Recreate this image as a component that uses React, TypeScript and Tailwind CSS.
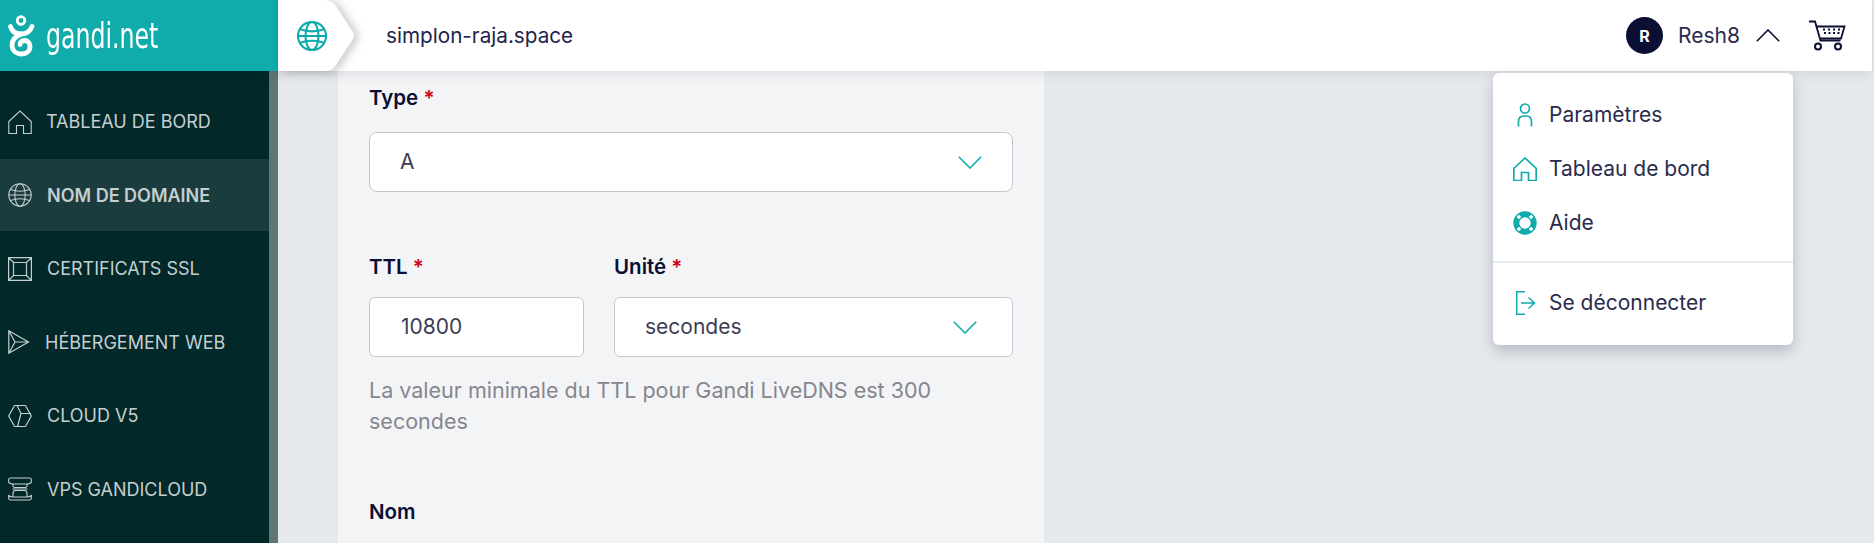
import type { ReactNode } from 'react';

function HomeIcon({ className, width = 1.1 }: { className: string; width?: number }) {
  return (
    <svg className={className} viewBox="0 0 24 24" fill="none" stroke="currentColor" strokeWidth={width}>
      <path d="M.8 11.5 12 1l11.200 10.500v12H15.500v-8h-7v8H.8z" />
    </svg>
  );
}

function GlobeIcon({ className, width = 1.1 }: { className: string; width?: number }) {
  return (
    <svg className={className} viewBox="0 0 24 24" fill="none" stroke="currentColor" strokeWidth={width}>
      <circle cx="12" cy="12" r="11.200" />
      <ellipse cx="12" cy="12" rx="5.200" ry="11.200" />
      <path d="M2.600 6.600c5.400 2.200 13.400 2.200 18.800 0M2.600 17.400c5.400-2.200 13.400-2.200 18.800 0M.8 12h22.400" />
    </svg>
  );
}

function FrameIcon() {
  return (
    <svg className="h-6 w-6" viewBox="0 0 24 24" fill="none" stroke="currentColor" strokeWidth="1.200">
      <path d="M.6.6h22.800v22.800H.6zM5.500 5.500h13v13h-13zM.6.6l4.900 4.900M23.400.6l-4.900 4.900M.6 23.400l4.900-4.900M23.400 23.400l-4.900-4.900" />
    </svg>
  );
}

function SendIcon() {
  return (
    <svg className="h-6 w-6" viewBox="0 0 24 24" fill="none" stroke="currentColor" strokeWidth="1.200">
      <path d="M.8.8 20.500 12 .8 23.200zM.8.8 7 12 .8 23.200M7 12h13.500" />
    </svg>
  );
}

function CubeIcon() {
  return (
    <svg className="h-6 w-6" viewBox="0 0 24 24" fill="none" stroke="currentColor" strokeWidth="1.200">
      <path d="M6.500 1.500h11L23.300 12l-5.800 10.500h-11L.7 12zM9 1.500 13 9.500h10M13 9.500 9.500 22.500" />
    </svg>
  );
}

function ServerIcon() {
  return (
    <svg className="h-6 w-6" viewBox="0 0 24 24" fill="none" stroke="currentColor" strokeWidth="1.100">
      <path d="M.7 5.500V2.500Q.7 1 2.500 1h19q1.800 0 1.800 1.500v3q-2 1.500-4 1.500H4.700Q2.700 7 .7 5.500z" />
      <path d="M.7 18.500v3Q.7 23 2.500 23h19q1.800 0 1.800-1.500v-3q-2 1.500-4 1.500H4.700q-2 0-4-1.500z" />
      <path d="M5 7v2q0 1.500 2 1.500h10q2 0 2-1.500V7M5 20v-3q0-3.500 2-3.500h10q2 0 2 3.500v3M4.500 12h15" />
    </svg>
  );
}

function Chevron({ className }: { className: string }) {
  return (
    <svg className={className} viewBox="0 0 24 13" fill="none" stroke="currentColor" strokeWidth="1.600">
      <path d="M.8.8 12 12 23.200.8" />
    </svg>
  );
}

function LogoMark() {
  return (
    <svg className="h-[42px] w-[27px]" viewBox="0 0 27 42" fill="none" stroke="white">
      <circle cx="13" cy="5.500" r="3.800" strokeWidth="2.800" />
      <path d="M2.500 11.500c1.500 5.500 5.500 7.500 10.500 7.500s9-2 11-7.500" strokeWidth="4.800" strokeLinecap="round" />
      <path d="M13 19c-5 2-9 5.500-9 11 0 5.500 4 9 9.500 9 5 0 8.500-3 8.500-7.500 0-3.500-2.500-6-5.500-6-2.500 0-4.500 1.500-4.500 4" strokeWidth="4.800" strokeLinecap="round" />
    </svg>
  );
}

function Cart() {
  return (
    <svg className="h-[31px] w-[37px] text-[#0a0f33]" viewBox="0 0 37 31" fill="none" stroke="currentColor">
      <path d="M0 1.500h6l5.500 19h20" strokeWidth="1.800" />
      <path d="M8 6.500h27.500l-3.500 12H11.500" strokeWidth="1.800" />
      <circle cx="9" cy="26.500" r="3" strokeWidth="2" />
      <circle cx="29" cy="26.500" r="3" strokeWidth="2" />
      <path d="M14 9.500h2M19 9.500h2M24 9.500h2M29 9.500h2M15 13h2M19.500 13h2M24 13h2M28.500 13h2" strokeWidth="1.800" />
    </svg>
  );
}

function Field({ label, required, children }: { label: string; required?: boolean; children: ReactNode }) {
  return (
    <div>
      <div className="text-[20.500px] leading-[27px] font-semibold text-[#0a0f33]">
        {label}
        {required && <span className="text-[#d0021b]"> *</span>}
      </div>
      {children}
    </div>
  );
}

const navItems = [
  { label: 'TABLEAU DE BORD', icon: <HomeIcon className="h-6 w-6" />, gap: 'ml-[14px]' },
  { label: 'NOM DE DOMAINE', icon: <GlobeIcon className="h-6 w-6" />, gap: 'ml-[15px]', active: true },
  { label: 'CERTIFICATS SSL', icon: <FrameIcon />, gap: 'ml-[15px]' },
  { label: 'HÉBERGEMENT WEB', icon: <SendIcon />, gap: 'ml-[13px]' },
  { label: 'CLOUD V5', icon: <CubeIcon />, gap: 'ml-[15px]' },
  { label: 'VPS GANDICLOUD', icon: <ServerIcon />, gap: 'ml-[15px]' },
];

export default function App() {
  return (
    <div className="relative h-[543px] w-[1874px] overflow-hidden bg-[#e6e9ec] font-['Inter',sans-serif]">
      <header className="relative z-20 flex h-[71px] w-[1872px] bg-white shadow-[0_2px_12px_rgba(10,15,51,0.1)]">
        <div className="flex w-[278px] items-center bg-[#10abab] pl-[8px]">
          <LogoMark />
          <span className="ml-[11px] origin-left scale-x-[0.73] font-['DejaVu_Sans_Condensed','DejaVu_Sans',sans-serif] text-[36px] leading-none text-white">
            gandi.net
          </span>
        </div>

        <div className="relative flex w-[108px] items-center">
          <svg className="absolute left-0 top-0 h-[71px] w-[100px] drop-shadow-[4px_1px_5px_rgba(0,0,0,0.22)]" viewBox="0 0 100 71">
            <path d="M0 0h47q7 0 11 6l17 26q2 3.500 0 7L58 65q-4 6-11 6H0z" fill="white" />
          </svg>
          <GlobeIcon className="relative ml-[19px] h-[30px] w-[30px] text-[#10abab]" width={1.7} />
        </div>

        <div className="flex flex-1 items-center text-[20.700px] text-[#22234a]">simplon-raja.space</div>

        <div className="flex items-center pr-[27px]">
          <div className="flex h-[37px] w-[37px] items-center justify-center rounded-full bg-[#0a0f33] text-[16px] font-bold text-white">R</div>
          <span className="ml-[15px] text-[21px] text-[#2a2b4d]">Resh8</span>
          <Chevron className="ml-4 h-[13px] w-6 rotate-180 text-[#0a0f33]" />
          <div className="ml-[29px] mr-[-1px]">
            <Cart />
          </div>
        </div>
      </header>

      <div className="flex h-[472px]">
        <nav className="flex w-[278px] shrink-0 border-r-[9px] border-[#5f7677] bg-[#022829] pt-[14.500px]">
          <ul className="w-full">
            {navItems.map((item) => (
              <li
                key={item.label}
                className={`mb-[1.600px] flex h-[72px] items-center pl-2 text-[#c5cfcf] ${item.active ? 'bg-[#1b3c3f]' : ''}`}
              >
                {item.icon}
                <span className={`${item.gap} text-[18px] ${item.active ? 'font-semibold' : ''}`}>{item.label}</span>
              </li>
            ))}
          </ul>
        </nav>

        <main className="flex-1 pl-[60px]">
          <div className="h-full w-[706px] bg-[#f3f4f6] px-[31px] pt-[13px]">
            <Field label="Type" required>
              <div className="mt-[21px] flex h-[60px] items-center justify-between rounded-lg border border-[#c5c6d0] bg-white pl-[30px] pr-[30px] text-[21px] text-[#3c3d55]">
                A
                <Chevron className="h-[13px] w-6 text-[#10abab]" />
              </div>
            </Field>

            <div className="mt-[61px] flex gap-[30px]">
              <div className="w-[215px]">
                <Field label="TTL" required>
                  <div className="mt-[17px] flex h-[60px] items-center rounded-md border border-[#c5c6d0] bg-white pl-[31px] text-[21px] text-[#3c3d55]">
                    10800
                  </div>
                </Field>
              </div>
              <div className="flex-1">
                <Field label="Unité" required>
                  <div className="mt-[17px] flex h-[60px] items-center justify-between rounded-md border border-[#c5c6d0] bg-white pl-[30px] pr-[35px] text-[21px] text-[#3c3d55]">
                    secondes
                    <Chevron className="h-[13px] w-6 text-[#10abab]" />
                  </div>
                </Field>
              </div>
            </div>

            <p className="mt-[18px] w-[600px] text-[21.500px] leading-[31px] text-[#85868f]">
              La valeur minimale du TTL pour Gandi LiveDNS est 300 secondes
            </p>

            <div className="mt-[61px]">
              <Field label="Nom">{null}</Field>
            </div>
          </div>
        </main>
      </div>

      <div className="absolute left-[1493px] top-[73px] z-30 h-[272px] w-[300px] rounded-md bg-white text-[21px] text-[#2a2b4d] shadow-[0_6px_14px_rgba(10,15,51,0.22)]">
        <ul className="pt-[14px]">
          <li className="flex h-[55px] items-center pl-[20px]">
            <svg className="h-6 w-6 text-[#10abab]" viewBox="0 0 24 24" fill="none" stroke="currentColor" strokeWidth="1.700">
              <circle cx="12" cy="5.500" r="4.500" />
              <path d="M5.500 23.500v-5q0-5.500 5.500-5.500h2q5.500 0 5.500 5.500v5" />
            </svg>
            <span className="ml-[12px]">Paramètres</span>
          </li>
          <li className="flex h-[54px] items-center pl-[20px]">
            <HomeIcon className="h-6 w-6 text-[#10abab]" width={1.700} />
            <span className="ml-[12px]">Tableau de bord</span>
          </li>
          <li className="flex h-[54px] items-center pl-[20px]">
            <svg className="h-6 w-6 text-[#10abab]" viewBox="0 0 24 24" fill="none" stroke="currentColor">
              <circle cx="12" cy="12" r="8.700" strokeWidth="6" />
              <path d="M7.100 7.100 4.800 4.800M16.900 7.100l2.300-2.300M7.100 16.900l-2.300 2.300M16.900 16.900l2.300 2.300" stroke="white" strokeWidth="3.200" />
            </svg>
            <span className="ml-[12px]">Aide</span>
          </li>
        </ul>
        <div className="mt-[11px] border-t-2 border-[#e6e9ec]" />
        <div className="mt-[13px] flex h-[54px] items-center pl-[20px]">
          <svg className="h-6 w-6 text-[#10abab]" viewBox="0 0 24 24" fill="none" stroke="currentColor" strokeWidth="1.500">
            <path d="M12 .8H3.700v22.400H12M8 12h13.500M15.500 6.500 21.500 12l-6 5.500" />
          </svg>
          <span className="ml-[12px]">Se déconnecter</span>
        </div>
      </div>
    </div>
  );
}
